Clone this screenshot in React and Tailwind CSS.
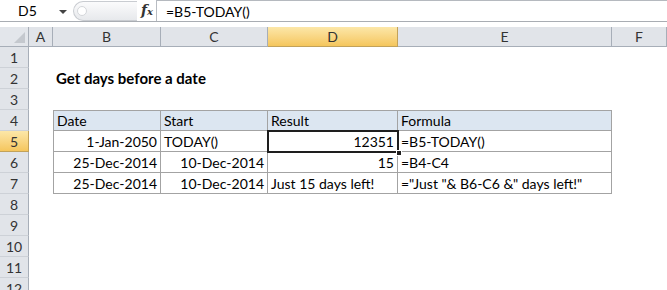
import React from "react";

const font = { fontFamily: "Lato, 'Open Sans', sans-serif" };

const colW = ["w-[24px]", "w-[108px]", "w-[107px]", "w-[130px]", "w-[214px]", "w-[55px]"];
const colL = ["A", "B", "C", "D", "E", "F"];

function HeaderRow() {
  return (
    <div className="flex h-[20px]">
      <div className="relative w-[29px] h-full bg-[#e3e6eb] border-r border-b border-[#a7aeb8]">
        <div className="absolute right-[3px] bottom-[3px] w-0 h-0 border-l-[11px] border-l-transparent border-b-[11px] border-b-[#c4c8ce]" />
      </div>
      {colL.map((c, i) => (
        <div
          key={c}
          className={
            colW[i] +
            " h-full flex items-center justify-center text-[14px] border-r border-b " +
            (c === "D"
              ? "bg-gradient-to-b from-[#fce7a8] to-[#f5c65c] border-[#c2a25a] text-[#333]"
              : "bg-[#e1e4e9] border-[#a7aeb8] text-[#333]")
          }
        >
          {c}
        </div>
      ))}
    </div>
  );
}

function Cell({ w, children, align = "left", cls = "" }) {
  return (
    <div
      className={
        w +
        " h-full flex items-center px-[3px] whitespace-nowrap overflow-visible text-[14px] text-black " +
        (align === "right" ? "justify-end " : "justify-start ") +
        cls
      }
    >
      {children}
    </div>
  );
}

const tb = "border-r border-b border-[#a3a3a3]";

function Row({ n, children }) {
  const sel = n === 5;
  return (
    <div className="flex h-[21px]">
      <div
        className={
          "w-[29px] h-full flex items-center justify-center text-[14px] text-[#333] border-r border-b " +
          (sel
            ? "bg-gradient-to-b from-[#fce7a8] to-[#f5c65c] border-[#c2a25a]"
            : "bg-[#e1e4e9] border-r-[#a7aeb8] border-b-[#cdd1d7]")
        }
      >
        {n}
      </div>
      {children}
    </div>
  );
}

export default function App() {
  const rows = [1, 2, 3, 4, 5, 6, 7, 8, 9, 10, 11, 12];
  return (
    <div className="w-[667px] h-[290px] overflow-hidden bg-white" style={font}>
      {/* formula bar */}
      <div className="flex h-[22px] border-b border-[#a9adb3]">
        <div className="w-[70px] h-full flex items-center relative">
          <span className="ml-[18px] text-[14px] text-black">D5</span>
          <span className="absolute left-[59px] top-[10px] w-0 h-0 border-l-[4px] border-r-[4px] border-t-[4px] border-l-transparent border-r-transparent border-t-[#444]" />
        </div>
        <div className="w-[87px] h-full flex items-center border-r border-[#b8bcc2]">
          <div className="w-[64px] h-[20px] ml-[3px] rounded-l-full border border-r-0 border-[#c9ccd1] bg-gradient-to-b from-[#fbfbfc] to-[#e7e9ec] flex items-center">
            <div className="ml-[3px] w-[10px] h-[10px] rounded-full border border-[#d4d6da] bg-white" />
          </div>
          <span
            className="ml-[4px] text-[14px] italic font-bold text-[#333]"
            style={{ fontFamily: "'DejaVu Serif', 'Liberation Serif', serif" }}
          >
            f<span className="text-[10px]">x</span>
          </span>
        </div>
        <div className="flex-1 h-full flex items-center border-t border-[#b5b9bf]">
          <span className="ml-[9px] text-[14px] text-black">=B5-TODAY()</span>
        </div>
      </div>
      <div className="h-[5px] bg-white" />
      <HeaderRow />
      {rows.map((n) => {
        if (n === 2)
          return (
            <Row n={n} key={n}>
              <Cell w={colW[0]} />
              <Cell w="w-[300px]" cls="font-bold text-[15px]">
                Get days before a date
              </Cell>
            </Row>
          );
        if (n === 4)
          return (
            <Row n={n} key={n}>
              <Cell w={colW[0]} />
              <Cell w={colW[1]} cls={"bg-[#dce6f1] border-l border-t " + tb}>Date</Cell>
              <Cell w={colW[2]} cls={"bg-[#dce6f1] border-t " + tb}>Start</Cell>
              <Cell w={colW[3]} cls={"bg-[#dce6f1] border-t " + tb}>Result</Cell>
              <Cell w={colW[4]} cls={"bg-[#dce6f1] border-t " + tb}>Formula</Cell>
            </Row>
          );
        if (n === 5)
          return (
            <Row n={n} key={n}>
              <Cell w={colW[0]} />
              <Cell w={colW[1]} align="right" cls={"border-l " + tb}>1-Jan-2050</Cell>
              <Cell w={colW[2]} cls={tb}>TODAY()</Cell>
              <div className={colW[3] + " h-full relative"}>
                <div className="absolute left-[-1px] top-[-1px] right-[-1px] bottom-[-1px] border-2 border-[#1e1e1e] flex items-center justify-end pr-[3px] text-[14px] text-black">
                  12351
                </div>
                <div className="absolute right-[-4px] bottom-[-4px] w-[6px] h-[6px] bg-[#1e1e1e] border border-white" />
              </div>
              <Cell w={colW[4]} cls={tb}>=B5-TODAY()</Cell>
            </Row>
          );
        if (n === 6)
          return (
            <Row n={n} key={n}>
              <Cell w={colW[0]} />
              <Cell w={colW[1]} align="right" cls={"border-l " + tb}>25-Dec-2014</Cell>
              <Cell w={colW[2]} align="right" cls={tb}>10-Dec-2014</Cell>
              <Cell w={colW[3]} align="right" cls={tb}>15</Cell>
              <Cell w={colW[4]} cls={tb}>=B4-C4</Cell>
            </Row>
          );
        if (n === 7)
          return (
            <Row n={n} key={n}>
              <Cell w={colW[0]} />
              <Cell w={colW[1]} align="right" cls={"border-l " + tb}>25-Dec-2014</Cell>
              <Cell w={colW[2]} align="right" cls={tb}>10-Dec-2014</Cell>
              <Cell w={colW[3]} cls={tb}>Just 15 days left!</Cell>
              <Cell w={colW[4]} cls={tb}>="Just "&amp; B6-C6 &amp;" days left!"</Cell>
            </Row>
          );
        return <Row n={n} key={n} />;
      })}
    </div>
  );
}
